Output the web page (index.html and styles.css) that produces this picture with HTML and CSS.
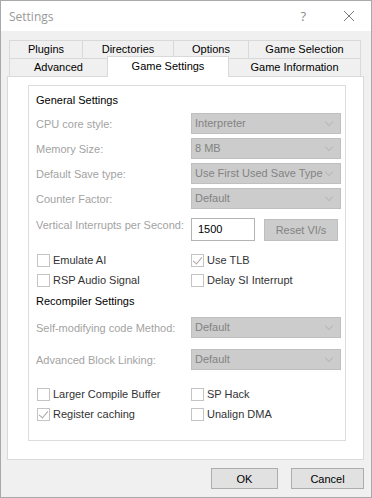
FILE: index.html
```html
<!DOCTYPE html>
<html lang="en">
<head>
  <meta charset="UTF-8" />
  <title>Settings</title>
  <link rel="stylesheet" href="styles.css">
</head>
<body>

  <div class="window">
    <div class="titlebar">
      <span class="title">Settings</span>
      <span class="help">?</span>
      <span class="close">
        <svg width="12" height="12" viewBox="0 0 12 12"><path d="M1 1 L11 11 M11 1 L1 11" stroke="#7a7a7a" stroke-width="1" fill="none"/></svg>
      </span>
    </div>

    <div class="content">
      <div class="tabs">
        <div class="tab-row">
          <div class="tab" style="width:73px">Plugins</div>
          <div class="tab" style="width:91px">Directories</div>
          <div class="tab" style="width:75px">Options</div>
          <div class="tab last" style="width:113px">Game Selection</div>
        </div>
        <div class="tab-row">
          <div class="tab" style="width:98px">Advanced</div>
          <div class="tab active" style="width:122px">Game Settings</div>
          <div class="tab last" style="width:132px">Game Information</div>
        </div>
      </div>

      <div class="panel">
        <div class="group">
          <div class="group-title">General Settings</div>

          <div class="field first">
            <label>CPU core style:</label>
            <div class="combo">Interpreter<span class="arrow"></span></div>
          </div>
          <div class="field">
            <label>Memory Size:</label>
            <div class="combo">8 MB<span class="arrow"></span></div>
          </div>
          <div class="field">
            <label>Default Save type:</label>
            <div class="combo">Use First Used Save Type<span class="arrow"></span></div>
          </div>
          <div class="field">
            <label>Counter Factor:</label>
            <div class="combo">Default<span class="arrow"></span></div>
          </div>

          <div class="vi-row">
            <label>Vertical Interrupts per Second:</label>
            <div class="textbox">1500</div>
            <div class="btn-disabled">Reset VI/s</div>
          </div>

          <div class="checks">
            <div class="check"><span class="box"></span>Emulate AI</div>
            <div class="check"><span class="box checked"></span>Use TLB</div>
            <div class="check"><span class="box"></span>RSP Audio Signal</div>
            <div class="check"><span class="box"></span>Delay SI Interrupt</div>
          </div>

          <div class="group-title second">Recompiler Settings</div>

          <div class="field smc">
            <label>Self-modifying code Method:</label>
            <div class="combo">Default<span class="arrow"></span></div>
          </div>
          <div class="field abl">
            <label>Advanced Block Linking:</label>
            <div class="combo">Default<span class="arrow"></span></div>
          </div>

          <div class="checks bottom">
            <div class="check"><span class="box"></span>Larger Compile Buffer</div>
            <div class="check"><span class="box"></span>SP Hack</div>
            <div class="check"><span class="box checked"></span>Register caching</div>
            <div class="check"><span class="box"></span>Unalign DMA</div>
          </div>
        </div>
      </div>

      <div class="buttons">
        <button class="ok">OK</button>
        <button class="cancel">Cancel</button>
      </div>
    </div>
  </div>

</body>
</html>
```

FILE: styles.css
```css
* {
  box-sizing: border-box;
}

body {
  margin: 0;
  font-family: "Liberation Sans", Arial, sans-serif;
  font-size: 11px;
  color: #000;
}

.window {
  width: 372px;
  height: 498px;
  border: 1px solid #a9a9a9;
  background: #f0f0f0;
  display: flex;
  flex-direction: column;
}

/* Title bar */
.titlebar {
  height: 30px;
  background: #fff;
  display: flex;
  align-items: center;
  padding-left: 8px;
}

.title {
  flex: 1;
  font-family: "Open Sans", "Noto Sans", sans-serif;
  font-size: 12px;
  color: #999;
}

.help {
  font-family: "Open Sans", sans-serif;
  font-size: 13px;
  color: #8a8a8a;
  margin-right: 37px;
}

.close {
  display: flex;
  margin-right: 16px;
}

/* Tabs */
.content {
  flex: 1;
  display: flex;
  flex-direction: column;
  padding: 9px 7px 0 6px;
}

.tabs {
  margin: 0 2px;
}

.tab-row {
  display: flex;
  align-items: flex-end;
  height: 18px;
}

.tab {
  height: 18px;
  border-top: 1px solid #d9d9d9;
  border-left: 1px solid #d9d9d9;
  background: #f0f0f0;
  text-align: center;
  line-height: 17px;
}

.tab.last {
  border-right: 1px solid #d9d9d9;
}

.tab.active {
  height: 21px;
  margin-bottom: -1px;
  background: #fff;
  border-right: 1px solid #d9d9d9;
  position: relative;
  z-index: 1;
  line-height: 18px;
}

.tab.active + .tab {
  border-left: none;
}

/* Panel */
.panel {
  height: 384px;
  background: #fff;
  border: 1px solid #d9d9d9;
  display: flex;
}

.group {
  flex: 1;
  margin: 8px 17px 18px 20px;
  border: 1px solid #dcdcdc;
  padding: 6px 4px 0 7px;
}

.group-title {
  height: 16px;
  line-height: 16px;
  color: #000;
}

.group-title.second {
  margin-top: 3px;
}

.field {
  display: flex;
  align-items: center;
  height: 21px;
  margin-top: 4px;
}

.field.first {
  margin-top: 5px;
}

.field.smc {
  margin-top: 8px;
}

.field.abl {
  margin-top: 11px;
}

label {
  width: 155px;
  color: #a3a3a3;
}

.combo {
  position: relative;
  width: 150px;
  height: 21px;
  background: #cccccc;
  border: 1px solid #bfbfbf;
  color: #838383;
  line-height: 19px;
  padding-left: 3px;
}

.arrow {
  position: absolute;
  right: 8px;
  top: 5px;
  width: 6px;
  height: 6px;
  border-right: 1px solid #b8b8b8;
  border-bottom: 1px solid #b8b8b8;
  transform: rotate(45deg);
}

.vi-row {
  display: flex;
  align-items: flex-start;
  margin-top: 9px;
  height: 23px;
}

.vi-row label {
  line-height: 14px;
}

.textbox {
  width: 64px;
  height: 23px;
  border: 1px solid #b4b4b4;
  background: #fff;
  line-height: 21px;
  padding-left: 6px;
}

.btn-disabled {
  width: 74px;
  height: 22px;
  margin: 1px 0 0 9px;
  background: #cccccc;
  border: 1px solid #bfbfbf;
  color: #838383;
  text-align: center;
  line-height: 20px;
}

.checks {
  display: grid;
  grid-template-columns: 154px 1fr;
  margin-top: 9px;
  padding-left: 1px;
}

.checks.bottom {
  margin-top: 14px;
}

.check {
  display: flex;
  align-items: center;
  height: 20px;
  color: #333;
}

.box {
  width: 13px;
  height: 13px;
  border: 1px solid #c4c4c4;
  background: #fff;
  margin-right: 3px;
  position: relative;
}

.box.checked::after {
  content: "";
  position: absolute;
  left: 3px;
  top: 0px;
  width: 4px;
  height: 8px;
  border-right: 1px solid #a8a8a8;
  border-bottom: 1px solid #a8a8a8;
  transform: rotate(40deg);
}

/* Dialog buttons */
.buttons {
  display: flex;
  justify-content: flex-end;
  gap: 13px;
  margin-top: 8px;
}

button {
  height: 21px;
  background: #e1e1e1;
  border: 1px solid #adadad;
  font-family: "Liberation Sans", Arial, sans-serif;
  font-size: 11px;
  color: #000;
  padding: 0;
}

button.ok {
  width: 67px;
}

button.cancel {
  width: 73px;
}
```
